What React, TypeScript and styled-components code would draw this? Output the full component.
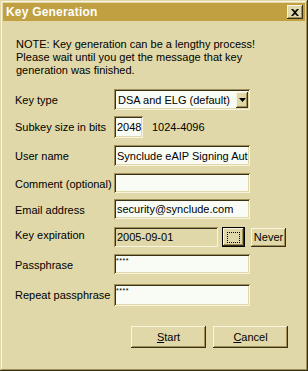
import React from 'react';
import styled, { createGlobalStyle, css } from 'styled-components';

const face = '#e0d8a8';
const light = '#f8f4e0';
const shadow = '#a09058';
const dark = '#383018';

const GlobalStyle = createGlobalStyle`
  html, body {
    margin: 0;
    padding: 0;
    background: ${face};
  }
  * {
    box-sizing: border-box;
  }
`;

const raised = css`
  border: none;
  box-shadow:
    inset -1px -1px 0 ${dark},
    inset 1px 1px 0 ${light},
    inset -2px -2px 0 ${shadow},
    inset 2px 2px 0 ${face};
`;

const sunken = css`
  border: none;
  box-shadow:
    inset 1px 1px 0 ${shadow},
    inset -1px -1px 0 ${light},
    inset 2px 2px 0 ${dark},
    inset -2px -2px 0 ${face};
`;

const Window = styled.div`
  width: 308px;
  height: 371px;
  padding: 3px;
  display: flex;
  flex-direction: column;
  background: ${face};
  font-family: 'Liberation Sans', Arial, sans-serif;
  font-size: 11px;
  color: #000;
  box-shadow:
    inset -1px -1px 0 ${dark},
    inset 1px 1px 0 ${face},
    inset -2px -2px 0 ${shadow},
    inset 2px 2px 0 ${light};
`;

const TitleBar = styled.div`
  height: 18px;
  background: #c0a040;
  display: flex;
  align-items: center;
  justify-content: space-between;
  padding: 0 2px 0 3px;
`;

const Title = styled.span`
  color: #fff;
  font-weight: bold;
  font-size: 12px;
  letter-spacing: 0.2px;
`;

const CloseButton = styled.div`
  ${raised};
  width: 16px;
  height: 14px;
  background: ${face};
  display: flex;
  align-items: center;
  justify-content: center;
`;

const Body = styled.div`
  padding: 17px 0 0 12px;
  display: flex;
  flex-direction: column;
`;

const Note = styled.p`
  margin: 0 0 0 1px;
  line-height: 13px;
`;

const Form = styled.div`
  margin-top: 12px;
  display: grid;
  grid-template-columns: 99px 1fr;
  grid-template-rows: 27px 29px 28px 26px 28px 27px 30px 22px;
  align-items: start;
`;

const Label = styled.div<{ $raise?: number }>`
  height: 21px;
  display: flex;
  align-items: center;
  margin-top: ${(p) => -(p.$raise ?? 0)}px;
`;

const FieldRow = styled.div`
  display: flex;
  align-items: center;
  gap: 4px;
`;

const TextBox = styled.div<{ $width?: number; $disabled?: boolean; $height?: number }>`
  ${sunken};
  width: ${(p) => p.$width ?? 136}px;
  height: ${(p) => p.$height ?? 21}px;
  background: ${(p) => (p.$disabled ? face : '#f8fcf4')};
  padding: 0 3px;
  display: flex;
  align-items: center;
  white-space: nowrap;
  overflow: hidden;
  font-size: 11px;
`;

const Masked = styled.span`
  font-size: 7px;
  letter-spacing: 0.5px;
  align-self: flex-start;
  margin-top: 3px;
  margin-left: -1px;
`;

const Combo = styled.div`
  ${sunken};
  width: 136px;
  height: 21px;
  background: #f8fcf4;
  display: flex;
  align-items: center;
  justify-content: space-between;
  padding: 2px 2px 2px 4px;
`;

const ComboArrow = styled.div`
  ${raised};
  width: 12px;
  height: 16px;
  background: ${face};
  display: flex;
  align-items: center;
  justify-content: center;
`;

const Hint = styled.span`
  margin-left: 5px;
`;

const SmallButton = styled.div<{ $width: number; $height: number; $default?: boolean; $gap?: number }>`
  ${raised};
  width: ${(p) => p.$width}px;
  height: ${(p) => p.$height}px;
  margin-left: ${(p) => p.$gap ?? 0}px;
  background: ${face};
  display: flex;
  align-items: center;
  justify-content: center;
  ${(p) =>
    p.$default &&
    css`
      box-shadow:
        inset 0 0 0 1px #000,
        inset -2px -2px 0 ${dark},
        inset 2px 2px 0 ${light},
        inset -3px -3px 0 ${shadow};
    `}
`;

const FocusRect = styled.div`
  width: 13px;
  height: 11px;
  border: 1px dotted #000;
`;

const Buttons = styled.div`
  display: flex;
  justify-content: flex-end;
  gap: 7px;
  margin-top: 20px;
  padding-right: 17px;
`;

const PushButton = styled.div`
  ${raised};
  width: 75px;
  height: 22px;
  background: ${face};
  display: flex;
  align-items: center;
  justify-content: center;
  font-size: 11px;
`;

const Key = styled.span`
  text-decoration: underline;
`;

const App: React.FC = () => {
  return (
    <>
      <GlobalStyle />
      <Window>
        <TitleBar>
          <Title>Key Generation</Title>
          <CloseButton>
            <svg width="8" height="7" viewBox="0 0 8 7">
              <path d="M0 0h2l2 2 2-2h2L5 3.5 8 7H6L4 5 2 7H0l3-3.5z" fill="#000" />
            </svg>
          </CloseButton>
        </TitleBar>
        <Body>
          <Note>
            NOTE: Key generation can be a lengthy process!
            <br />
            Please wait until you get the message that key
            <br />
            generation was finished.
          </Note>
          <Form>
            <Label>Key type</Label>
            <Combo>
              <span>DSA and ELG (default)</span>
              <ComboArrow>
                <svg width="7" height="4" viewBox="0 0 7 4">
                  <path d="M0 0h7L3.5 4z" fill="#000" />
                </svg>
              </ComboArrow>
            </Combo>

            <Label>Subkey size in bits</Label>
            <FieldRow>
              <TextBox $width={29} $height={22}>2048</TextBox>
              <Hint>1024-4096</Hint>
            </FieldRow>

            <Label>User name</Label>
            <TextBox>Synclude eAIP Signing Aut</TextBox>

            <Label>Comment (optional)</Label>
            <TextBox $height={20} />

            <Label>Email address</Label>
            <TextBox $height={20}>security@synclude.com</TextBox>

            <Label $raise={3}>Key expiration</Label>
            <FieldRow>
              <TextBox $width={104} $height={20} $disabled>2005-09-01</TextBox>
              <SmallButton $width={23} $height={20} $default>
                <FocusRect />
              </SmallButton>
              <SmallButton $width={35} $height={19} $gap={2}>
                Never
              </SmallButton>
            </FieldRow>

            <Label>Passphrase</Label>
            <TextBox $height={20}>
              <Masked>****</Masked>
            </TextBox>

            <Label>Repeat passphrase</Label>
            <TextBox $height={22}>
              <Masked>****</Masked>
            </TextBox>
          </Form>
          <Buttons>
            <PushButton>
              <Key>S</Key>tart
            </PushButton>
            <PushButton>
              <Key>C</Key>ancel
            </PushButton>
          </Buttons>
        </Body>
      </Window>
    </>
  );
};

export default App;
